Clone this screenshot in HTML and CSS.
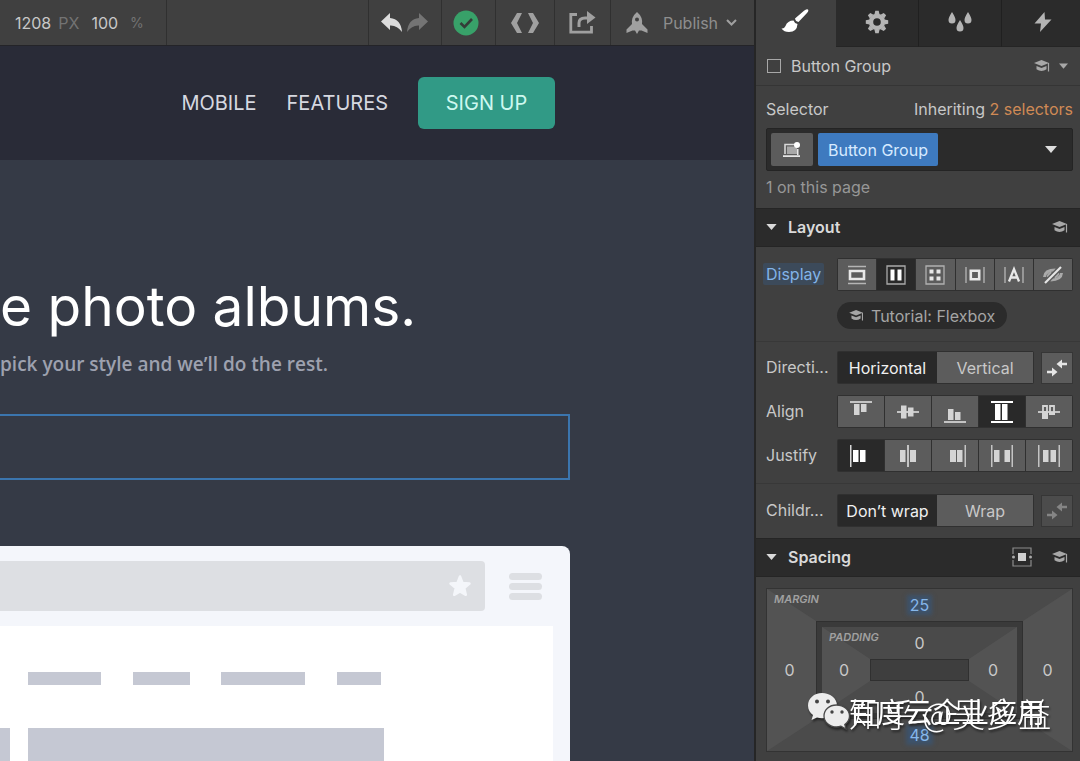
FILE: index.html
```html
<!DOCTYPE html>
<html lang="en">
<head>
<meta charset="utf-8">
<title>Designer</title>
<link rel="stylesheet" href="styles.css">
</head>
<body>
<svg class="defs" aria-hidden="true">
  <symbol id="cap" viewBox="0 0 16 12"><path d="M7.500 0 0 3 7.500 6 15 3Z" fill="currentColor"/><path d="M2.500 6v3.200q5 3.600 10 0V6l-5 2Z" fill="currentColor"/><path d="M14.500 3v8.500" stroke="currentColor" stroke-width="1.200"/></symbol>
  <symbol id="caret" viewBox="0 0 12 7"><path d="M0 0h12L6 7Z" fill="currentColor"/></symbol>
  <symbol id="swap" viewBox="0 0 20 20"><path d="M0 12.800h5V9.500l5.500 4.500L5 18.500v-3.300H0Z M20 4.800h-5V1.500L9.500 6l5.500 4.500V7.200h5Z" fill="currentColor"/></symbol>
</svg>
<div class="app">
  <main class="stage">
    <header class="toolbar">
      <div class="size"><span>1208</span><span class="unit">PX</span><span class="zoom">100</span><span class="unit">%</span></div>
      <div class="tool tool-history">
        <button aria-label="Undo"><svg class="undo" width="21" height="19" viewBox="0 0 21 19"><path d="M9 0v5q11 1 12 14Q16 12 9 12.500V17L0 8.500Z" fill="#dcdcdc"/></svg></button>
        <button aria-label="Redo"><svg width="21" height="19" viewBox="0 0 21 19"><path d="M12 0v5Q1 6 0 19q5-7 12-6.500V17l9-8.500Z" fill="#747474"/></svg></button>
      </div>
      <button class="tool tool-check" aria-label="Saved"><svg width="26" height="26" viewBox="0 0 26 26"><circle cx="13" cy="13" r="12.500" fill="#38a169"/><path d="m7.500 13 4 4L19 9" fill="none" stroke="#343c38" stroke-width="2.600"/></svg></button>
      <button class="tool tool-code" aria-label="Code"><svg width="28" height="20" viewBox="0 0 28 20"><path d="M6 0h5L6 10l5 10H6L0 10Z M22 0h-5l5 10-5 10h5l6-10Z" fill="#a0a0a0"/></svg></button>
      <button class="tool tool-share" aria-label="Share"><svg width="27" height="23" viewBox="0 0 27 23"><path d="M8 3.500H1.800v17.700h20.700V15" fill="none" stroke="#a0a0a0" stroke-width="2.800"/><path d="M10 16v-4q0-5 6-5h4" fill="none" stroke="#a0a0a0" stroke-width="3"/><path d="M18 0v13l8.500-6.500Z" fill="#a0a0a0"/></svg></button>
      <button class="tool tool-publish">
        <svg width="22" height="22" viewBox="0 0 22 22"><path fill-rule="evenodd" d="M11 0q6 5 5 12l5.500 5.500V21l-6-2.500H13L11 22l-2-3.500H6.500L.5 21v-3.500L6 12Q5 5 11 0ZM11 5.500a2 2 0 1 0 0 4 2 2 0 1 0 0-4Z" fill="#a0a0a0"/></svg>
        <span>Publish</span>
        <svg width="11" height="7" viewBox="0 0 11 7"><path d="m1 1 4.500 4.500L10 1" fill="none" stroke="#a0a0a0" stroke-width="2"/></svg>
      </button>
    </header>
    <nav class="site-nav">
      <a href="#mobile">MOBILE</a>
      <a href="#features">FEATURES</a>
      <a class="signup" href="#signup">SIGN UP</a>
    </nav>
    <section class="hero">
      <h1>e photo albums.</h1>
      <p>pick your style and we’ll do the rest.</p>
      <div class="selected"></div>
      <div class="mock">
        <div class="mock-bar">
          <div class="mock-url"><svg width="24" height="24" viewBox="0 0 24 24"><path d="m12 2.500 2.500 6.500 7 .6-5.300 4.500 1.600 6.700L12 17.400l-5.800 3.400 1.600-6.700L2.500 9.600l7-.6Z" fill="#f4f6fa" stroke="#f4f6fa" stroke-width="2.500" stroke-linejoin="round"/></svg></div>
          <div class="mock-menu"><i></i><i></i><i></i></div>
        </div>
        <div class="mock-page">
          <div class="mock-links"><i class="w1"></i><i class="w2"></i><i class="w3"></i><i class="w4"></i></div>
          <div class="mock-blocks"><i></i><i></i></div>
        </div>
      </div>
    </section>
  </main>

  <aside class="panel">
    <div class="tabs">
      <button class="on" aria-label="Style"><svg width="28" height="24" viewBox="0 0 28 24"><path d="M27 .5Q28 2 26 4l-8.500 9q-3-.5-3.500-3.500L23 1.800Q25.500-.5 27 .5ZM12.500 11.500q1 3 4 3.500-.5 8-8.500 8-5 0-7.500-3.500 2.500.5 4-2.500 2-5.500 8-5.500Z" fill="#fff"/></svg></button>
      <button aria-label="Settings"><svg width="24" height="24" viewBox="-12 -12 24 24"><g fill="#b4b4b4"><path fill-rule="evenodd" d="M0-8.200A8.200 8.200 0 1 0 0 8.200 8.200 8.200 0 1 0 0-8.200ZM0-3.800A3.800 3.800 0 1 1 0 3.800 3.800 3.800 0 1 1 0-3.800Z"/><g id="cog"><path d="M-2.600-7.500-1.700-11.200H1.700L2.600-7.500ZM-2.600 7.500-1.700 11.200H1.700L2.600 7.500Z"/></g><use href="#cog" transform="rotate(45)"/><use href="#cog" transform="rotate(90)"/><use href="#cog" transform="rotate(135)"/></g></svg></button>
      <button aria-label="Styles in use"><svg width="24" height="20" viewBox="0 0 24 20"><path d="M4 0q3.500 5.500 3.500 8a3.500 3.500 0 0 1-7 0Q.5 5.500 4 0ZM20 0q3.500 5.500 3.500 8a3.500 3.500 0 0 1-7 0q0-2.500 3.500-8ZM12 8q3.500 5.500 3.500 8a3.500 3.500 0 0 1-7 0q0-2.500 3.500-8Z" fill="#b4b4b4"/></svg></button>
      <button aria-label="Interactions"><svg width="18" height="20" viewBox="0 0 18 20"><path d="m10.500 0-10 11.500H7L6 20 17.500 7.500H11Z" fill="#b4b4b4"/></svg></button>
    </div>

    <div class="element">
      <span class="box"></span>
      <span class="grow">Button Group</span>
      <svg class="muted" width="16" height="12"><use href="#cap"/></svg>
      <svg class="muted" width="9" height="6"><use href="#caret"/></svg>
    </div>

    <div class="selector">
      <div class="split"><span>Selector</span><span>Inheriting <a href="#inherited">2 selectors</a></span></div>
      <div class="picker">
        <button class="device" aria-label="States"><svg width="18" height="16" viewBox="0 0 18 16"><path d="M2 12V2.500h10" fill="none" stroke="#d8d8d8" stroke-width="1.600"/><path d="M4 4.500h10V12H4Z" fill="#a8a8a8"/><path d="M0 13.200h17V15H0ZM14 7h1.500v6H14Z" fill="#e6e6e6"/><circle cx="14" cy="3" r="3" fill="#fff"/></svg></button>
        <button class="chip">Button Group</button>
        <button class="open" aria-label="Open selector list"><svg width="12" height="7"><use href="#caret"/></svg></button>
      </div>
      <div class="count">1 on this page</div>
    </div>

    <h2><svg width="11" height="6"><use href="#caret"/></svg><span class="grow">Layout</span><svg class="muted" width="16" height="12"><use href="#cap"/></svg></h2>

    <div class="rows rows-display">
      <div class="row">
        <span class="label"><mark>Display</mark></span>
        <div class="seg">
          <button aria-label="Block"><svg width="18" height="20" viewBox="0 0 18 20"><path d="M0 1.500h18M0 18.500h18" stroke="#b5b5b5" stroke-width="1.500"/><path d="M2 6h14v8H2Z" fill="none" stroke="#e8e8e8" stroke-width="2.600"/></svg></button>
          <button class="on" aria-label="Flex"><svg width="20" height="20" viewBox="0 0 20 20"><path d="M1 1h18v18H1Z" fill="none" stroke="#aaa" stroke-width="1.300"/><path d="M4.500 4.500h4v11h-4ZM11.500 4.500h4v11h-4Z" fill="#fff"/></svg></button>
          <button aria-label="Grid"><svg width="20" height="20" viewBox="0 0 20 20"><path d="M1 1h18v18H1Z" fill="none" stroke="#b0b0b0" stroke-width="1.300"/><path d="M4.500 4.500h4v4h-4ZM11.500 4.500h4v4h-4ZM4.500 11.500h4v4h-4ZM11.500 11.500h4v4h-4Z" fill="#e8e8e8"/></svg></button>
          <button aria-label="Inline block"><svg width="20" height="20" viewBox="0 0 20 20"><path d="M1 2v16M19 2v16" stroke="#b0b0b0" stroke-width="1.400"/><path d="M5.800 5.800h8.400v8.400H5.800Z" fill="none" stroke="#e8e8e8" stroke-width="2.600"/></svg></button>
          <button aria-label="Inline"><svg width="20" height="20" viewBox="0 0 20 20"><path d="M1 2v16M19 2v16" stroke="#b0b0b0" stroke-width="1.400"/><path d="M5 16.500 10 4l5 12.500M6.500 12.500h7" fill="none" stroke="#e8e8e8" stroke-width="2.300"/></svg></button>
          <button aria-label="None"><svg width="20" height="20" viewBox="0 0 20 20"><path d="M1.500 12Q2 5 12.500 5M18.500 8Q18 15 7.500 15" fill="none" stroke="#aaa" stroke-width="3"/><path d="M5 12q0-3 3.500-4.500M15 8q0 3-3.500 4.500" fill="none" stroke="#aaa" stroke-width="2.400"/><path d="M2 18 18 2" stroke="#5c5c5c" stroke-width="5"/><path d="M2 18 18 2" stroke="#e6e6e6" stroke-width="2.200"/></svg></button>
        </div>
      </div>
      <button class="tutorial"><svg width="15" height="11"><use href="#cap"/></svg>Tutorial: Flexbox</button>
    </div>

    <div class="rows rows-flex">
      <div class="row">
        <span class="label">Directi...</span>
        <div class="seg seg-text"><button class="on">Horizontal</button><button>Vertical</button></div>
        <button class="swap" aria-label="Reverse"><svg width="20" height="20"><use href="#swap"/></svg></button>
      </div>
      <div class="row">
        <span class="label">Align</span>
        <div class="seg">
          <button aria-label="Start"><svg width="22" height="22" viewBox="0 0 22 22"><path d="M0 0h22v2H0Z" fill="#c4c4c4"/><path d="M4 3h5.500v11H4ZM11 3h5.500v8H11Z" fill="#d4d4d4"/></svg></button>
          <button aria-label="Center"><svg width="22" height="22" viewBox="0 0 22 22"><path d="M0 10h22v2H0Z" fill="#c4c4c4"/><path d="M4 4.500h5.500v13H4ZM11 6.500h5.500v9H11Z" fill="#d4d4d4"/></svg></button>
          <button aria-label="End"><svg width="22" height="22" viewBox="0 0 22 22"><path d="M0 20h22v2H0Z" fill="#c4c4c4"/><path d="M4 8h5.500v11H4ZM11 11h5.500v8H11Z" fill="#d4d4d4"/></svg></button>
          <button class="on" aria-label="Stretch"><svg width="22" height="22" viewBox="0 0 22 22"><path d="M0 0h22v2H0ZM0 20h22v2H0ZM4 3h5.500v16H4ZM11 3h5.500v16H11Z" fill="#fff"/></svg></button>
          <button aria-label="Baseline"><svg width="22" height="22" viewBox="0 0 22 22"><path d="M0 10h22v2H0Z" fill="#c4c4c4"/><path d="M4 11h6v7H4ZM11 11h6v3h-6Z" fill="#d4d4d4"/><path d="M5 5h4v6H5ZM12 5h4v8h-4Z" fill="none" stroke="#d4d4d4" stroke-width="1.800"/></svg></button>
        </div>
      </div>
      <div class="row">
        <span class="label">Justify</span>
        <div class="seg">
          <button class="on" aria-label="Start"><svg width="22" height="22" viewBox="0 0 22 22"><path d="M0 0h1.500v22H0Z" fill="#d8d8d8"/><path d="M3 5h5.500v12H3ZM10 5h5.500v12H10Z" fill="#fff"/></svg></button>
          <button aria-label="Center"><svg width="22" height="22" viewBox="0 0 22 22"><path d="M10 0h2v22h-2Z" fill="#c4c4c4"/><path d="M3 5h5.500v12H3ZM13 5h6v12h-6Z" fill="#d4d4d4"/></svg></button>
          <button aria-label="End"><svg width="22" height="22" viewBox="0 0 22 22"><path d="M20.500 0H22v22h-1.500Z" fill="#c4c4c4"/><path d="M6 5h6v12H6ZM13 5h5.500v12H13Z" fill="#d4d4d4"/></svg></button>
          <button aria-label="Space between"><svg width="22" height="22" viewBox="0 0 22 22"><path d="M0 0h1.500v22H0ZM20.500 0H22v22h-1.500Z" fill="#c4c4c4"/><path d="M3 5h5.500v12H3ZM13.500 5H19v12h-5.500Z" fill="#d4d4d4"/></svg></button>
          <button aria-label="Space around"><svg width="22" height="22" viewBox="0 0 22 22"><path d="M0 0h1.500v22H0ZM20.500 0H22v22h-1.500Z" fill="#c4c4c4"/><path d="M5 5h5.500v12H5ZM12.500 5H18v12h-5.500Z" fill="#d4d4d4"/></svg></button>
        </div>
      </div>
    </div>

    <div class="rows rows-wrap">
      <div class="row">
        <span class="label">Childr...</span>
        <div class="seg seg-text"><button class="on">Don’t wrap</button><button>Wrap</button></div>
        <button class="swap" disabled aria-label="Reverse wrap"><svg width="20" height="20"><use href="#swap"/></svg></button>
      </div>
    </div>

    <h2><svg width="11" height="6"><use href="#caret"/></svg><span class="grow">Spacing</span><svg class="fit" width="20" height="20" viewBox="0 0 20 20"><path d="M1 7V1h18v6M1 13v6h18v-6" fill="none" stroke="#8c8c8c" stroke-width="1.200"/><path d="M6 6h8v8H6Z" fill="#d0d0d0"/><circle cx="1.500" cy="10" r="1.500" fill="#aaa"/><circle cx="18.500" cy="10" r="1.500" fill="#aaa"/></svg><svg class="muted" width="16" height="12"><use href="#cap"/></svg></h2>

    <div class="spacing">
      <div class="ring">
        <span class="ring-name">MARGIN</span>
        <button class="top set"><span>25</span></button>
        <button class="left">0</button>
        <div class="inner ring">
          <span class="ring-name">PADDING</span>
          <button class="top">0</button>
          <button class="left">0</button>
          <div class="core"></div>
          <button class="right">0</button>
          <button class="bottom">0</button>
        </div>
        <button class="right">0</button>
        <button class="bottom set"><span>48</span></button>
      </div>
    </div>

    <div class="watermark">
      <svg width="44" height="38" viewBox="0 0 44 38"><path d="M15 1C7 1 1 6.500 1 13.500c0 4 2 7.500 5 9.500l-1.500 5L10 25.500q2.500.8 5 .8c8 0 15-5.500 15-12.800S23 1 15 1Z" fill="#ececec"/><path d="M29.500 13C22 13 17 18 17 24s5.500 11 12.500 11q2.500 0 4.500-.8L39 37l-1.200-4.500c3-2 4.700-5 4.700-8.500 0-6-5.500-11-13-11Z" fill="#ececec" stroke="#4a4a4a" stroke-width="1.300"/><g fill="#444"><circle cx="10" cy="9.500" r="2"/><circle cx="21" cy="9.500" r="2"/><circle cx="25" cy="20" r="1.700"/><circle cx="35" cy="20" r="1.700"/></g></svg>
      <div class="marks"><span class="mark-a">百度云企业应用</span><span class="mark-b">知乎 @吴多益</span></div>
    </div>
  </aside>
</div>
</body>
</html>
```

FILE: styles.css
```css
* { box-sizing: border-box; }
body { margin: 0; font-family: Inter, "Liberation Sans", sans-serif; font-size: 16px; line-height: 20px; color: #c8c8c8; background: #353a46; }
button { font: inherit; color: inherit; border: 0; padding: 0; margin: 0; background: none; display: flex; align-items: center; justify-content: center; }
svg { display: block; flex: none; }
.defs { position: absolute; width: 0; height: 0; }
.app { display: grid; grid-template-columns: minmax(0, 1fr) 326px; min-height: 100vh; }
.grow { flex: 1; }
.muted { color: #a8a8a8; }

.stage { display: flex; flex-direction: column; overflow: hidden; }
.toolbar { display: flex; height: 46px; background: #404040; border-bottom: 1px solid #242428; }
.size { display: flex; align-items: center; width: 167px; padding-left: 15px; margin-right: auto; border-right: 1px solid #303030; }
.unit { color: #737373; margin-left: 7px; }
.zoom { margin-left: 12px; }
.zoom + .unit { margin-left: 12px; font-size: 14px; }
.tool { display: flex; align-items: center; justify-content: center; border-left: 1px solid #303030; }
.tool-history { width: 73px; gap: 5px; padding-right: 2px; }
.tool-check { width: 54px; padding-right: 5px; }
.tool-code { width: 59px; }
.tool-share { width: 56px; }
.tool-publish { width: 144px; gap: 8px; padding-right: 2px; color: #8e8e8e; }
.tool-publish span { margin-left: 7px; }

.site-nav { display: flex; align-items: center; justify-content: flex-end; gap: 30px; height: 114px; padding-right: 199px; background: #292b37; font-size: 20px; }
.site-nav a { color: #d6d8e0; text-decoration: none; }
.site-nav .signup { display: flex; align-items: center; justify-content: center; width: 137px; height: 52px; border-radius: 6px; background: #319a86; color: #cdf8ef; }
.hero { flex: 1; display: flex; flex-direction: column; padding: 114px 184px 0 0; }
.hero h1 { margin: 0; color: #fff; font-size: 55px; line-height: 64px; font-weight: 400; white-space: nowrap; }
.hero p { margin: 14px 0 38px; color: #9da1af; font: 600 19px/24px "Open Sans", sans-serif; white-space: nowrap; }
.selected { height: 66px; border: solid #3b75ae; border-width: 2px 2px 2px 0; }
.mock { flex: 1; display: flex; flex-direction: column; margin-top: 66px; padding-right: 17px; border-radius: 0 8px 0 0; background: #f4f6fb; }
.mock-bar { display: flex; align-items: center; gap: 24px; height: 80px; padding-right: 11px; }
.mock-url { flex: 1; display: flex; align-items: center; justify-content: flex-end; height: 50px; padding-right: 13px; border-radius: 0 4px 4px 0; background: #dddfe3; }
.mock-menu { display: grid; gap: 3px; width: 33px; }
.mock-menu i { height: 7px; border-radius: 4px; background: #dddfe3; }
.mock-page { flex: 1; display: flex; flex-direction: column; padding: 46px 169px 0 0; background: #fff; }
.mock-links { display: flex; padding-left: 28px; justify-content: space-between; padding-right: 3px; }
.mock-links i { height: 13px; background: #c5c8d3; }
.w1 { width: 73px; }
.w2 { width: 57px; }
.w3 { width: 84px; }
.w4 { width: 44px; }
.mock-blocks { flex: 1; display: grid; grid-template-columns: 10px 1fr; gap: 18px; margin-top: 43px; }
.mock-blocks i { background: #c5c8d3; min-height: 33px; }

.panel { position: relative; overflow: hidden; background: #404040; border-left: 2px solid #262626; }
.tabs { display: grid; grid-template-columns: 81px repeat(3, 1fr); height: 47px; margin: 0 -5px 0 -1px; }
.tabs button { background: #2b2b2b; border-right: 1px solid #202020; border-bottom: 1px solid #252525; padding-bottom: 2px; }
.tabs .on { background: #404040; border: 0; padding: 0 2px 6px 0; }
.element { display: flex; align-items: center; gap: 9px; height: 39px; padding: 0 12px 0 11px; border-bottom: 1px solid #353535; }
.box { width: 14px; height: 14px; border: 1px solid #a8a8a8; margin-right: 1px; }
.selector { padding: 13px 7px 11px 10px; }
.split { display: flex; justify-content: space-between; }
.split a { color: #d08a55; text-decoration: none; }
.picker { display: flex; align-items: center; gap: 5px; height: 43px; margin: 9px 0 6px; padding: 0 4px; background: #2b2b2b; border: 1px solid #242424; border-radius: 2px; }
.device { width: 42px; height: 33px; background: #5c5c5c; border-radius: 2px; }
.chip { height: 33px; padding: 0 10px; background: #3e7abf; color: #d7eaff; border-radius: 2px; }
.open { margin-left: auto; width: 34px; height: 33px; color: #dedede; }
.count { color: #979797; }
.panel h2 { display: flex; align-items: center; gap: 11px; height: 39px; margin: 0; padding: 0 12px 1px 10px; background: #2b2b2b; border: solid #252525; border-width: 1px 0; font-size: 16px; font-weight: 600; color: #dadada; }
.fit { margin-right: 9px; }

.rows { display: grid; gap: 11px; padding: 10px 7px 11px 10px; }
.rows-display { padding-top: 11px; padding-bottom: 12px; border-bottom: 1px solid #383838; }
.rows-flex { padding-top: 9px; border-bottom: 1px solid #383838; }
.row { display: flex; align-items: center; }
.label { width: 71px; flex: none; padding-bottom: 2px; }
.label mark { margin-left: -3px; padding: 1px 3px; color: #82b4e8; background: #3c4a5a; border-radius: 2px; }
.seg { flex: 1; display: grid; grid-auto-flow: column; grid-auto-columns: 1fr; gap: 1px; height: 33px; padding: 1px; background: #303030; border-radius: 2px; }
.seg button { background: #5c5c5c; }
.seg .on { background: #292929; color: #f0f0f0; }
.seg-text { grid-template-columns: 99px 1fr; gap: 0; }
.swap { width: 32px; height: 32px; margin-left: 7px; background: #5c5c5c; border: 1px solid #363636; color: #e6e6e6; }
.swap:disabled { background: #4c4c4c; color: #858585; }
.tutorial { justify-self: start; margin-left: 71px; height: 27px; padding: 0 12px; gap: 7px; border-radius: 14px; background: #2b2b2b; color: #a5a5a5; }

.spacing { padding: 11px 7px 9px 10px; }
.ring { position: relative; display: grid; grid-template: 32px 1fr 32px / 49px 1fr 49px; height: 164px; border: 1px solid #333; }
.ring::before { content: ""; position: absolute; inset: 0; border-style: solid; border-width: 32px 49px; border-color: #4a4a4a #535353 #4b4b4b; }
.ring > * { position: relative; z-index: 1; }
.ring .ring-name { position: absolute; left: 7px; top: 4px; font-size: 11px; line-height: 13px; font-weight: 600; font-style: italic; color: #a0a0a0; }
.top, .bottom { grid-column: 1 / 4; }
.top { grid-row: 1; }
.left, .right { grid-row: 2; }
.left { grid-column: 1; padding-right: 4px; }
.right { grid-column: 3; }
.bottom { grid-row: 3; }
.set { color: #86b7ea; }
.set span { background: #3d526a; box-shadow: 0 0 4px 3px #3d526a; line-height: 14px; }
.ring .inner { grid-area: 2 / 2; height: auto; border: 6px solid #3a3a3a; outline: 1px solid #303030; outline-offset: -1px; grid-template-columns: 48px 1fr 48px; }
.inner.ring::before { border-width: 32px 48px; }
.core { grid-area: 2 / 2; background: #3e3e3e; border: 1px solid #303030; }

.watermark { position: absolute; z-index: 3; right: 28px; bottom: 27px; display: flex; align-items: flex-start; width: 245px; height: 42px; filter: drop-shadow(1px 2px 1px #222); pointer-events: none; }
.marks { display: grid; margin-left: -2px; font-family: "Noto Sans CJK SC", sans-serif; color: #fff; white-space: nowrap; }
.marks span { grid-area: 1 / 1; }
.mark-a { font-size: 28px; line-height: 38px; }
.mark-b { font-size: 33px; line-height: 42px; font-weight: 300; }
```
